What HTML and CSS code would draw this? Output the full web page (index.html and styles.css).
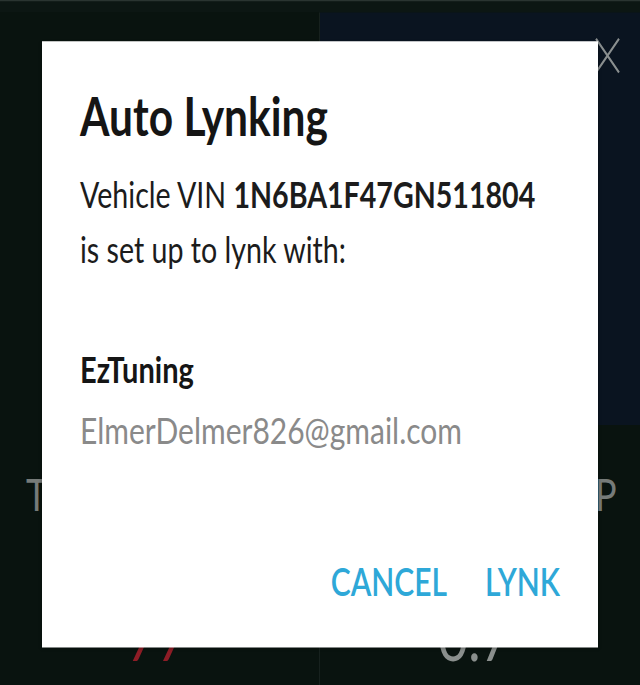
FILE: index.html
```html
<!DOCTYPE html>
<html>
<head>
<meta charset="utf-8">
<link rel="stylesheet" href="styles.css">
</head>
<body>
<div class="page">
<div class="screen">
  <div class="app">
    <div class="topline"></div>
    <div class="cols">
      <div class="col col-left">
        <div class="head head-left"></div>
        <div class="label label-left">T</div>
        <div class="value value-red">77</div>
      </div>
      <div class="col col-right">
        <div class="head head-right">
          <svg class="close" viewBox="0 0 25 29" width="25" height="29"><path d="M1 1 L24 28 M24 1 L1 28" stroke="#8a8f8f" stroke-width="2" fill="none"/></svg>
        </div>
        <div class="label label-right">P</div>
        <div class="value value-gray">0.7</div>
      </div>
    </div>
  </div>
  <div class="dialog">
    <h1 class="title">Auto Lynking</h1>
    <p class="body">Vehicle VIN <b>1N6BA1F47GN511804</b><br>is set up to lynk with:</p>
    <p class="name">EzTuning</p>
    <p class="email">ElmerDelmer826@gmail.com</p>
    <div class="actions">
      <span class="btn">CANCEL</span>
      <span class="btn">LYNK</span>
    </div>
  </div>
</div>
</div>
</body>
</html>
```
FILE: styles.css
```css
html, body {
  margin: 0;
  padding: 0;
  background: #0a1411;
}
.page {
  width: 640px;
  height: 685px;
  overflow: hidden;
  position: relative;
}
.screen {
  position: relative;
  width: 640px;
  height: 548px;
  transform: scaleY(1.25);
  transform-origin: 0 0;
  font-family: Lato, "Open Sans", sans-serif;
}
.app {
  width: 640px;
  height: 548px;
  display: flex;
  flex-direction: column;
  background: #09130f;
}
.topline {
  height: 9px;
  background: #0c1613;
  border-top: 1px solid #2a3431;
}
.cols {
  flex: 1;
  display: grid;
  grid-template-columns: 320px 320px;
}
.col {
  display: flex;
  flex-direction: column;
  position: relative;
}
.col-left {
  border-right: 1px solid #17211e;
}
.head {
  height: 330px;
}
.head-left { background: #09130f; }
.head-right {
  background: #0a1420;
  display: flex;
  justify-content: flex-end;
  padding: 20px 20px 0 0;
  box-sizing: border-box;
}
.close { display: block; }
.label {
  font-size: 36px;
  color: #767b79;
  line-height: 36px;
  margin-top: 37px;
}
.label-left { padding-left: 26px; }
.label-right { padding-left: 275px; }
.value {
  font-size: 52px;
  line-height: 52px;
  margin-top: 70px;
}
.value-red {
  color: #8e1d26;
  font-style: italic;
  padding-left: 128px;
}
.value-gray {
  color: #8a8f8d;
  padding-left: 118px;
}
.dialog {
  position: absolute;
  left: 42px;
  top: 33px;
  width: 556px;
  height: 485px;
  box-sizing: border-box;
  background: #ffffff;
  padding: 36px 38px 33px 38px;
  display: flex;
  flex-direction: column;
  box-shadow: 0 1px 3px rgba(0,0,0,0.4);
}
.title {
  margin: 0;
  font-size: 42.5px;
  line-height: 48px;
  font-weight: 700;
  color: #151515;
}
.body {
  margin: 16px 0 0 0;
  font-size: 28.6px;
  line-height: 44px;
  color: #1c1c1c;
}
.body b { font-weight: 700; }
.name {
  margin: 53px 0 0 0;
  font-size: 29px;
  line-height: 42px;
  font-weight: 700;
  color: #151515;
}
.email {
  margin: 6px 0 0 0;
  font-size: 30px;
  line-height: 42px;
  color: #8a8a8a;
}
.actions {
  margin-top: auto;
  display: flex;
  justify-content: flex-end;
  gap: 38px;
}
.btn {
  font-size: 30px;
  line-height: 40px;
  font-weight: 600;
  color: #2ea8d8;
}
```
